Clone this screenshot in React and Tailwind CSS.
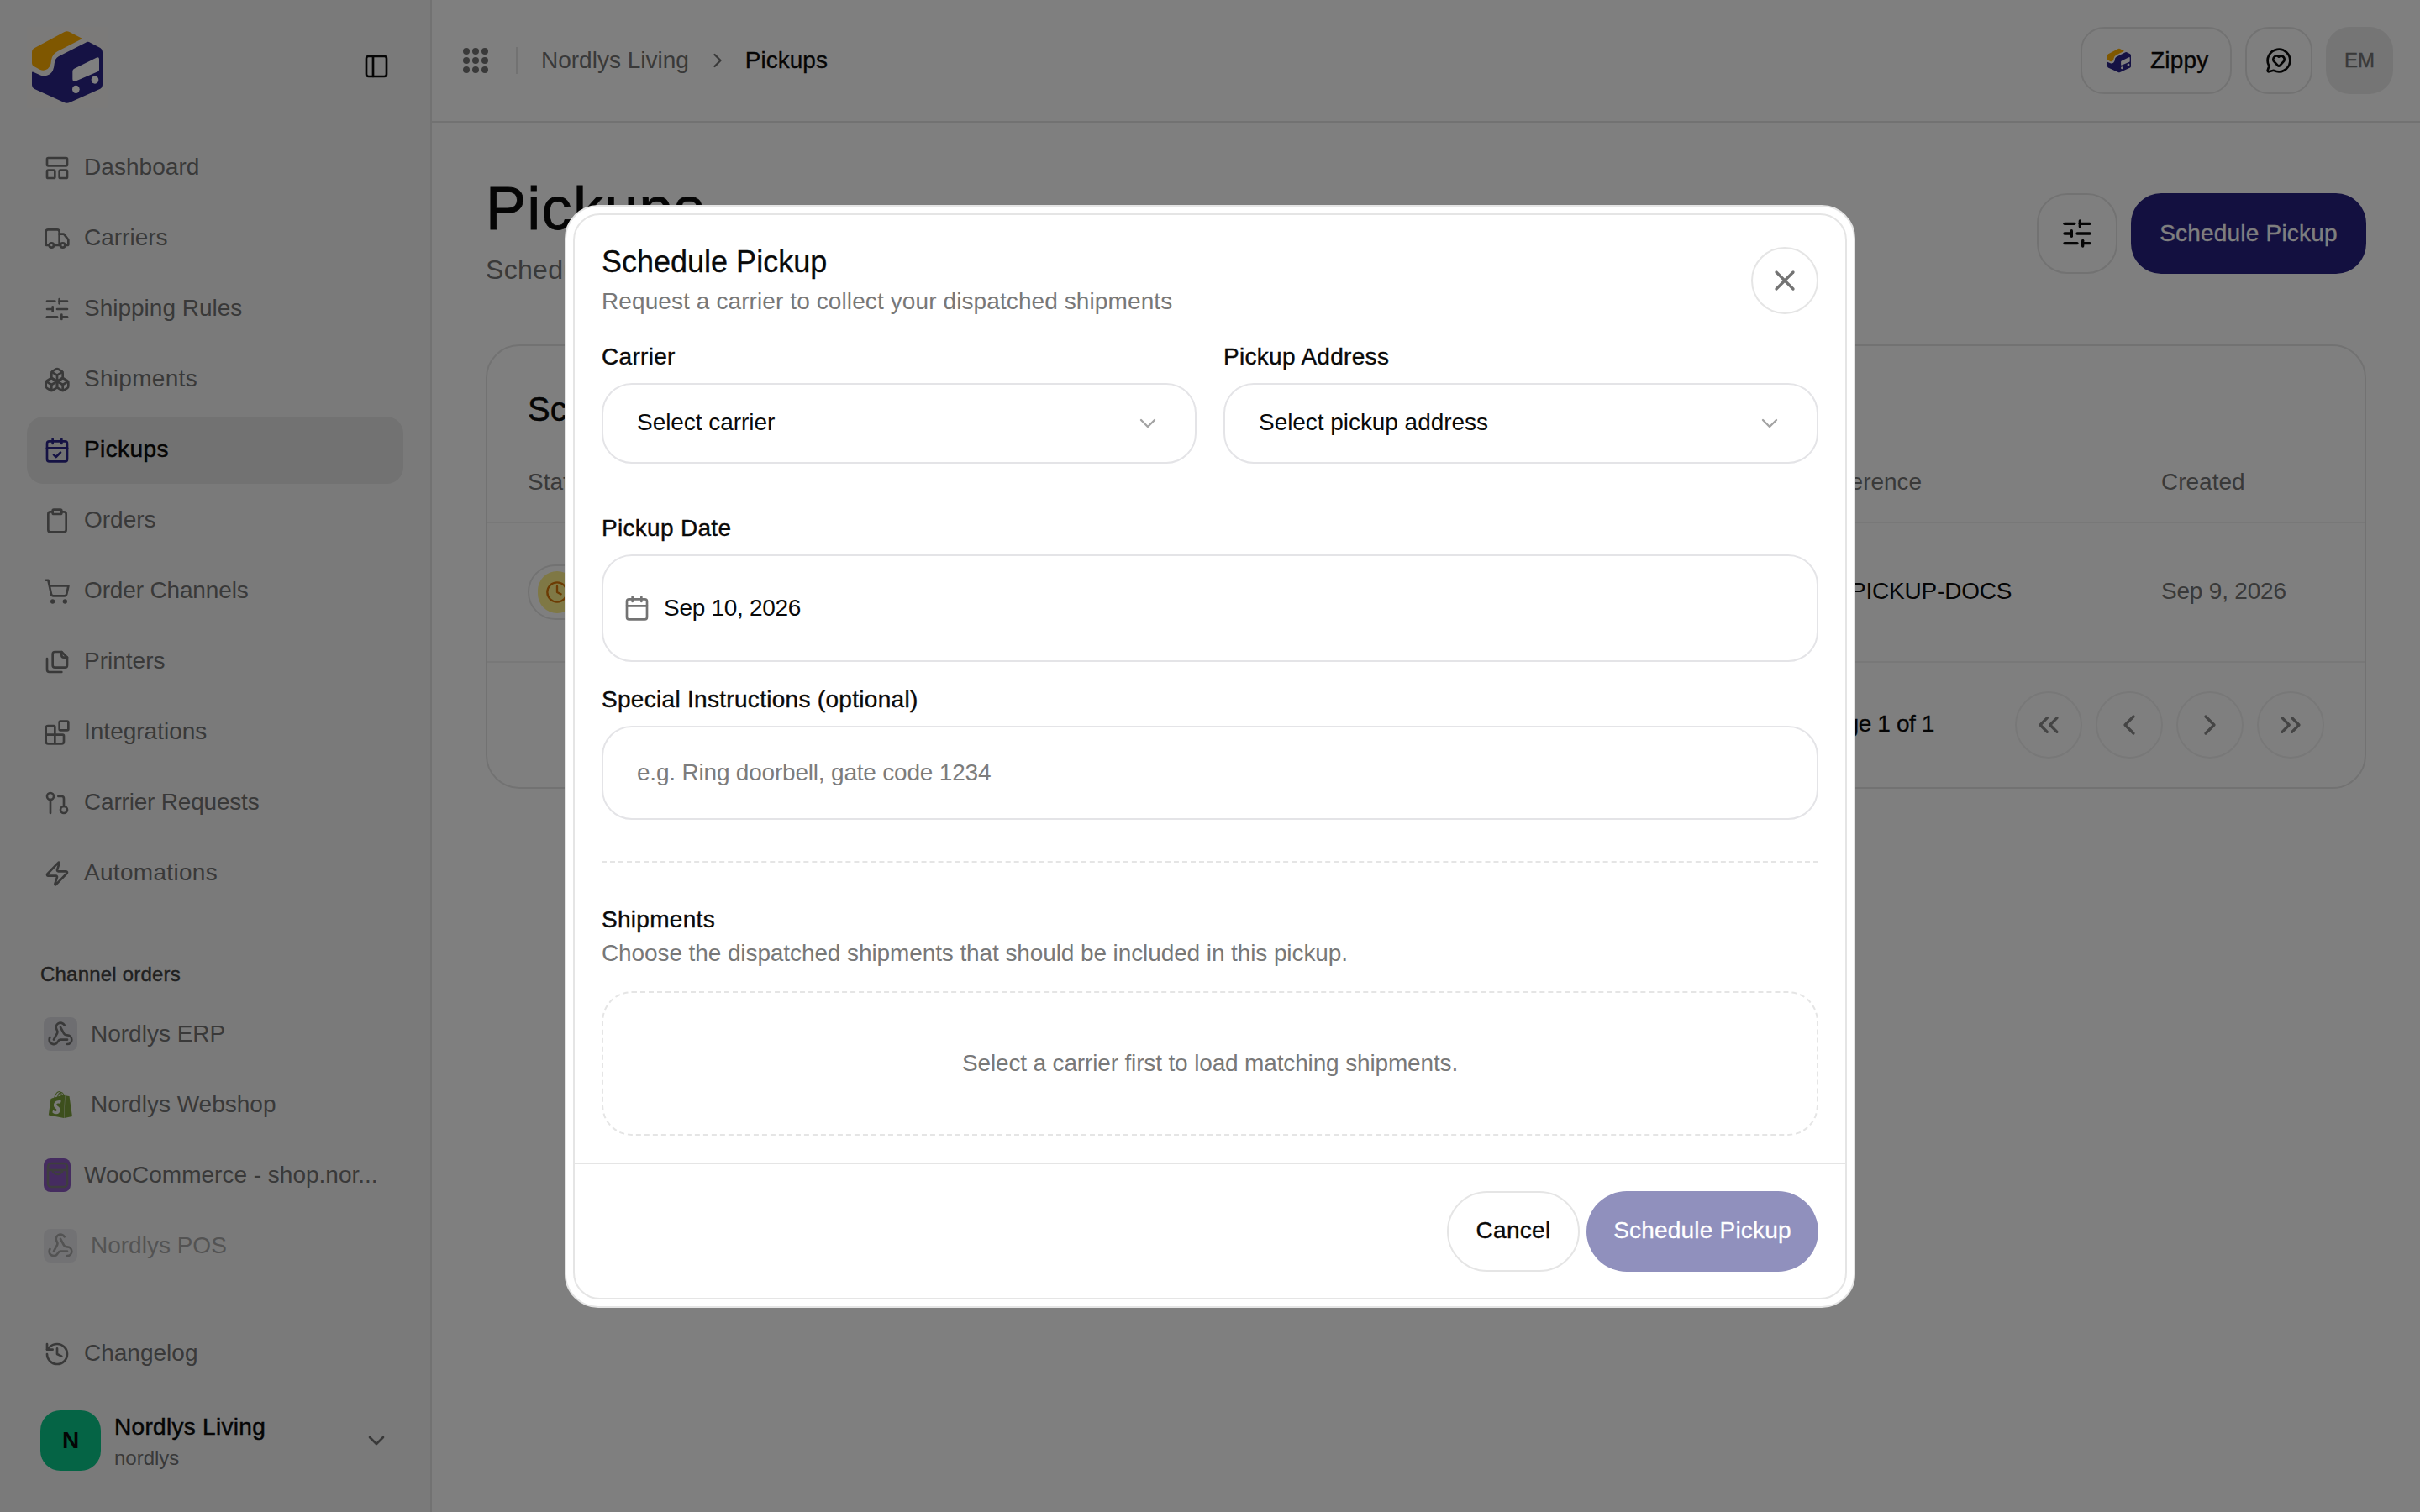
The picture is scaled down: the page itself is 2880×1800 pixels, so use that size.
import React from "react";
import {
  LayoutPanelTop, Truck, SlidersHorizontal, Boxes, CalendarCheck, Clipboard, ShoppingCart, Blocks,
  GitPullRequest, Zap, History, Webhook, ChevronDown, ChevronRight, ChevronLeft, ChevronsLeft, ChevronsRight,
  PanelLeft, MessageCircleHeart, Clock, Calendar, X,
} from "lucide-react";
import { SiShopify } from "react-icons/si";

function Logo({ className }) {
  return (
    <svg viewBox="30 28 252 258" className={className}>
      <path d="M146 31 Q155 26 164 31 L210 55 L122 100 Q102 110 99 132 Q98 160 78 167 Q68 170 58 165 L36 153 Q30 150 30 143 L30 103 Q30 93 40 88 Z" fill="#ffae00" />
      <path d="M222 69 Q230 64 238 69 L274 88 Q282 93 282 102 L282 221 Q282 230 274 234 L165 283 Q155 287 145 283 L38 234 Q30 230 30 221 L30 176 Q30 172 35 174 L62 186 Q78 192 94 182 Q108 172 110 146 Q110 128 126 118 Z" fill="#2a2488" />
      <path d="M181 162 L260 123 Q270 119 270 128 L270 166 Q270 171 265 173 L185 207 Q175 210 175 200 L175 172 Q175 165 181 162 Z" fill="#fff" />
      <ellipse cx="187" cy="236" rx="13" ry="14" fill="#fff" />
      <ellipse cx="255" cy="202" rx="13" ry="14" fill="#fff" />
    </svg>
  );
}

function PrinterDocs({ size = 32, className }) {
  return (
    <svg width={size} height={size} viewBox="0 0 24 24" fill="none" stroke="currentColor" strokeWidth="2" strokeLinecap="round" strokeLinejoin="round" className={className}>
      <path d="M8 5a2 2 0 0 1 2-2h6l5 5v7a2 2 0 0 1-2 2H10a2 2 0 0 1-2-2z" />
      <path d="M16 3v3a2 2 0 0 0 2 2h3" />
      <path d="M3 9v10a2 2 0 0 0 2 2h11" />
    </svg>
  );
}

const navItems = [
  [LayoutPanelTop, "Dashboard", "tracking-[0.05px]"],
  [Truck, "Carriers", ""],
  [SlidersHorizontal, "Shipping Rules", ""],
  [Boxes, "Shipments", "tracking-[0.3px]"],
  [CalendarCheck, "Pickups", "tracking-[0.4px]", true],
  [Clipboard, "Orders", ""],
  [ShoppingCart, "Order Channels", "tracking-[-0.15px]"],
  [PrinterDocs, "Printers", ""],
  [Blocks, "Integrations", ""],
  [GitPullRequest, "Carrier Requests", "tracking-[-0.2px]"],
  [Zap, "Automations", "tracking-[0.3px]"],
];

function NavItem({ Icon, label, track = "", active }) {
  return (
    <div className={`flex h-20 items-center gap-4 rounded-[20px] px-5 text-[28px] ${active ? "bg-[#e4e4e4] text-[#0a0a0a] [-webkit-text-stroke:0.5px]" : "text-[#737373]"}`}>
      <Icon size={32} strokeWidth={2} className={active ? "text-[#2a2488]" : "text-[#737373]"} />
      <span className={`mb-[2px] ${track}`}>{label}</span>
    </div>
  );
}

function Sidebar() {
  return (
    <aside className="flex h-full w-[514px] shrink-0 flex-col border-r-2 border-[#e5e5e5] bg-[#f5f5f5]">
      <div className="flex h-[160px] shrink-0 items-start justify-between pl-8 pr-[48px] pt-8">
        <div className="flex h-[96px] w-[96px] items-center justify-center bg-[#f7f5f2]">
          <Logo className="h-[86px] w-[84px]" />
        </div>
        <PanelLeft size={32} strokeWidth={2} className="mt-[31px] text-[#0a0a0a]" />
      </div>
      <nav className="flex flex-col gap-1 px-8">
        {navItems.map(([Icon, label, track, active]) => (
          <NavItem key={label} Icon={Icon} label={label} track={track} active={active} />
        ))}
      </nav>
      <div className="mb-[13px] mt-[62px] pl-12 text-[24px] leading-[36px] tracking-[0.2px] text-[#404040] [-webkit-text-stroke:0.4px]">Channel orders</div>
      <div className="flex flex-col gap-1 px-8">
        <div className="flex h-20 items-center gap-4 px-5 text-[28px] text-[#737373]">
          <span className="flex h-10 w-10 items-center justify-center rounded-lg bg-[#dcdce2]"><Webhook size={32} strokeWidth={2} /></span>
          <span>Nordlys ERP</span>
        </div>
        <div className="flex h-20 items-center gap-4 px-5 text-[28px] text-[#737373]">
          <span className="flex h-10 w-10 items-center justify-center"><SiShopify size={32} className="text-[#7a9f3a]" /></span>
          <span>Nordlys Webshop</span>
        </div>
        <div className="flex h-20 items-center gap-4 px-5 text-[28px] text-[#737373]">
          <span className="flex h-10 w-8 shrink-0 items-center justify-center rounded-lg bg-[#8a58c0]">
            <svg viewBox="0 0 32 40" className="h-10 w-8" fill="none" stroke="#7c7c7c" strokeWidth="2.6">
              <rect x="5" y="6" width="23" height="28" rx="4" />
              <path d="M5 14h23" />
              <path d="M11 16q5 6 11 0" strokeLinecap="round" />
            </svg>
          </span>
          <span className="whitespace-nowrap">WooCommerce - shop.nor...</span>
        </div>
        <div className="flex h-20 items-center gap-4 px-5 text-[28px] text-[#737373] opacity-60">
          <span className="flex h-10 w-10 items-center justify-center rounded-lg bg-[#dcdce2]"><Webhook size={32} strokeWidth={2} /></span>
          <span>Nordlys POS</span>
        </div>
      </div>
      <div className="mt-[49px] px-8">
        <NavItem Icon={History} label="Changelog" />
      </div>
      <div className="mt-6 flex items-center pl-12 pr-[48px]">
        <div className="flex h-[72px] w-[72px] items-center justify-center rounded-[24px] bg-[#0bc98a] text-[28px] font-bold text-[#0a0a0a]">N</div>
        <div className="ml-4 mt-[4px] flex flex-col">
          <span className="text-[28px] leading-[38px] tracking-[0.3px] text-[#0a0a0a] [-webkit-text-stroke:0.5px]">Nordlys Living</span>
          <span className="text-[24px] leading-[36px] text-[#737373]">nordlys</span>
        </div>
        <ChevronDown size={32} strokeWidth={2} className="ml-auto text-[#737373]" />
      </div>
    </aside>
  );
}

function Dots() {
  return (
    <div className="grid h-[32px] w-[32px] grid-cols-3 grid-rows-3 place-items-center">
      {Array.from({ length: 9 }).map((_, i) => (
        <span key={i} className="h-[8px] w-[8px] rounded-full bg-[#737373]" />
      ))}
    </div>
  );
}

function TopBar() {
  return (
    <header className="flex h-[146px] shrink-0 items-center border-b-2 border-[#e5e5e5] pl-[36px] pr-[32px]">
      <div className="flex items-center">
        <Dots />
        <span className="ml-[32px] h-8 w-0.5 bg-[#e5e5e5]" />
        <span className="ml-[28px] text-[28px] text-[#737373]">Nordlys Living</span>
        <ChevronRight size={28} strokeWidth={2} className="ml-[20px] text-[#737373]" />
        <span className="ml-[19px] text-[28px] text-[#0a0a0a] [-webkit-text-stroke:0.3px]">Pickups</span>
      </div>
      <div className="ml-auto flex items-center gap-4">
        <div className="flex h-20 w-[180px] items-center rounded-[28px] border-2 border-[#e5e5e5] pl-[30px] text-[28px] tracking-[0.2px] text-[#0a0a0a] [-webkit-text-stroke:0.4px]">
          <Logo className="h-[30px] w-[28px]" />
          <span className="ml-[23px]">Zippy</span>
        </div>
        <div className="flex h-20 w-20 items-center justify-center rounded-[28px] border-2 border-[#e5e5e5] text-[#0a0a0a]">
          <MessageCircleHeart size={32} strokeWidth={2} />
        </div>
        <div className="flex h-20 w-20 items-center justify-center rounded-[28px] bg-[#ebebeb] text-[24px] text-[#737373] [-webkit-text-stroke:0.4px]">EM</div>
      </div>
    </header>
  );
}

function PageButton({ Icon }) {
  return (
    <div className="flex h-20 w-20 items-center justify-center rounded-full border-2 border-[#f0f0f0]">
      <Icon size={40} strokeWidth={2} className="text-[#8a8a8a]" />
    </div>
  );
}

function Main() {
  return (
    <main className="flex h-full min-w-0 flex-1 flex-col bg-white">
      <TopBar />
      <div className="px-16">
        <div className="flex items-center justify-between pt-[62px]">
          <div>
            <h1 className="text-[72px] leading-[80px] tracking-[1.3px] text-[#0a0a0a] [-webkit-text-stroke:0.8px]">Pickups</h1>
            <p className="mt-[9px] text-[32px] leading-[48px] tracking-[0.3px] text-[#737373]">Schedule and track carrier pickups</p>
          </div>
          <div className="mt-[3px] flex items-center gap-4">
            <div className="flex h-24 w-24 items-center justify-center rounded-[36px] border-2 border-[#e5e5e5] text-[#0a0a0a]">
              <SlidersHorizontal size={40} strokeWidth={2} />
            </div>
            <div className="flex h-24 w-[280px] items-center justify-center rounded-[36px] bg-[#262080] pb-[1px] text-[28px] tracking-[0.2px] text-white [-webkit-text-stroke:0.3px]">Schedule Pickup</div>
          </div>
        </div>
        <section className="mt-[65px] rounded-[40px] border-2 border-[#e5e5e5]">
          <h2 className="pl-12 pt-[47px] text-[40px] leading-[56px] text-[#0a0a0a] [-webkit-text-stroke:0.5px]">Scheduled Pickups</h2>
          <div className="mt-[12px] grid h-[96px] grid-cols-[1530px_414px_1fr] items-center border-b-2 border-[#f0f0f0] pl-12 text-[28px] text-[#737373]">
            <span>Status</span>
            <span>Reference</span>
            <span>Created</span>
          </div>
          <div className="grid h-[166px] grid-cols-[1530px_414px_1fr] items-center border-b-2 border-[#f0f0f0] pl-12 text-[28px]">
            <span className="flex h-[66px] w-[180px] items-center rounded-full border-2 border-[#e5e5e5] pl-2.5">
              <span className="flex h-[50px] w-[46px] items-center justify-center rounded-full bg-[#fef08a]">
                <Clock size={28} strokeWidth={2} className="text-[#d97706]" />
              </span>
            </span>
            <span className="mb-[2px] pl-[44px] tracking-[-0.2px] text-[#0a0a0a]">PICKUP-DOCS</span>
            <span className="mb-[2px] tracking-[-0.2px] text-[#737373]">Sep 9, 2026</span>
          </div>
          <div className="flex h-[148px] items-center justify-end pr-12">
            <span className="mb-[2px] mr-[96px] text-[28px] tracking-[-0.4px] text-[#0a0a0a] [-webkit-text-stroke:0.3px]">Page 1 of 1</span>
            <div className="flex gap-4">
              <PageButton Icon={ChevronsLeft} />
              <PageButton Icon={ChevronLeft} />
              <PageButton Icon={ChevronRight} />
              <PageButton Icon={ChevronsRight} />
            </div>
          </div>
        </section>
      </div>
    </main>
  );
}

function Field({ label, className = "", children }) {
  return (
    <div className={className}>
      <label className="block text-[28px] leading-[40px] tracking-[0.3px] text-[#0a0a0a] [-webkit-text-stroke:0.4px]">{label}</label>
      {children}
    </div>
  );
}

function SelectBox({ text }) {
  return (
    <div className="mt-[11px] flex h-24 items-center justify-between rounded-[36px] border-2 border-[#e4e4e7] pl-10 pr-10 text-[28px] text-[#0a0a0a]">
      <span className="mb-[2px] tracking-[-0.05px]">{text}</span>
      <ChevronDown size={32} strokeWidth={1.75} className="text-[#a3a3a3]" />
    </div>
  );
}

function Modal() {
  return (
    <div className="fixed inset-0 flex items-start justify-center bg-black/50 pt-[244px]">
      <div className="w-[1536px] rounded-[40px] border-2 border-[#e5e5e5] bg-white p-2">
        <div className="rounded-[32px] border-2 border-[#e5e5e5] bg-white">
          <div className="px-8 pb-8 pt-[29px]">
            <div className="flex items-start justify-between">
              <div>
                <h2 className="text-[36px] leading-[54px] text-[#0a0a0a] [-webkit-text-stroke:0.3px]">Schedule Pickup</h2>
                <p className="text-[28px] leading-[40px] tracking-[0.1px] text-[#787878]">Request a carrier to collect your dispatched shipments</p>
              </div>
              <button className="mt-[9px] flex h-20 w-20 items-center justify-center rounded-full border-2 border-[#e5e5e5] text-[#737373]">
                <X size={40} strokeWidth={2} />
              </button>
            </div>
            <div className="mt-[26px] grid grid-cols-2 gap-8">
              <Field label="Carrier"><SelectBox text="Select carrier" /></Field>
              <Field label="Pickup Address"><SelectBox text="Select pickup address" /></Field>
            </div>
            <Field label="Pickup Date" className="mt-[57px]">
              <div className="mt-[11px] flex h-32 items-center gap-[16px] rounded-[36px] border-2 border-[#e4e4e7] pl-[24px] text-[28px] text-[#0a0a0a]">
                <Calendar size={32} strokeWidth={2} className="text-[#737373]" />
                <span className="mb-[1px] tracking-[-0.3px]">Sep 10, 2026</span>
              </div>
            </Field>
            <Field label="Special Instructions (optional)" className="mt-[25px]">
              <div className="mt-[11px] flex h-[112px] items-center rounded-[36px] border-2 border-[#e4e4e7] pl-10 text-[28px] tracking-[-0.2px] text-[#7c7c7c]">
                e.g. Ring doorbell, gate code 1234
              </div>
            </Field>
            <div className="mt-[49px] border-t-2 border-dashed border-[#e5e5e5]" />
            <div className="mt-[48px] text-[28px] leading-[40px] tracking-[0.3px] text-[#0a0a0a] [-webkit-text-stroke:0.4px]">Shipments</div>
            <div className="text-[28px] leading-[40px] tracking-[-0.1px] text-[#787878]">Choose the dispatched shipments that should be included in this pickup.</div>
            <div className="mt-[25px] flex h-[172px] items-center justify-center rounded-[36px] border-2 border-dashed border-[#e5e5e5] pb-[1px] text-[28px] tracking-[-0.15px] text-[#787878]">
              Select a carrier first to load matching shipments.
            </div>
          </div>
          <div className="flex justify-end gap-2 border-t-2 border-[#e5e5e5] px-8 pb-[31px] pt-8">
            <button className="h-24 w-[158px] rounded-[48px] border-2 border-[#e5e5e5] pb-[3px] text-[28px] tracking-[0.3px] text-[#0a0a0a] [-webkit-text-stroke:0.4px]">Cancel</button>
            <button className="h-24 w-[276px] rounded-[48px] bg-[#9090bd] pb-[3px] text-[28px] tracking-[0.2px] text-white [-webkit-text-stroke:0.3px]">Schedule Pickup</button>
          </div>
        </div>
      </div>
    </div>
  );
}

export default function App() {
  return (
    <div className="relative flex h-[1800px] w-[2880px] overflow-hidden bg-white font-['Liberation_Sans',sans-serif]">
      <Sidebar />
      <Main />
      <Modal />
    </div>
  );
}
